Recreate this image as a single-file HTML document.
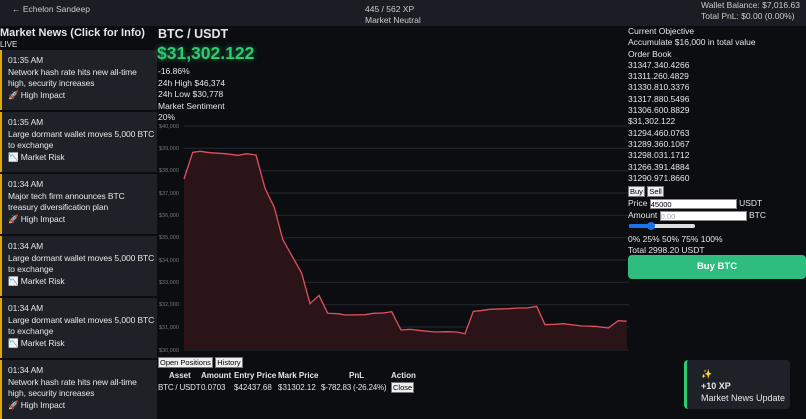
<!DOCTYPE html>
<html><head><meta charset="utf-8"><style>
*{margin:0;padding:0;box-sizing:border-box}
body{width:806px;height:419px;overflow:hidden;background:#0b0d11;color:#e6e6e6;font-family:"Liberation Sans",sans-serif;font-size:8.5px;position:relative}
.hdr{position:absolute;left:0;top:0;width:806px;height:26px;background:#1a1d23}
.abs{position:absolute;white-space:nowrap}
.card{position:absolute;left:0;width:157px;height:60px;background:#1e2127;border-left:2px solid #e0a800;padding:5px 0 0 6px;line-height:11.6px;font-size:8.5px;white-space:nowrap;overflow:hidden;letter-spacing:-0.1px}
.btn{display:inline-block;background:#efefef;color:#000;border:1px solid #767676;font-size:7.5px;padding:0 1px;line-height:9px}
.ob div{line-height:11.3px}
</style></head><body>
<div class="hdr"></div>
<div class="abs" style="left:12px;top:4px;color:#ccc">← Echelon Sandeep</div>
<div class="abs" style="left:365px;top:4px;color:#ccc">445 / 562 XP</div>
<div class="abs" style="left:365px;top:15px;color:#ccc">Market Neutral</div>
<div class="abs" style="left:701px;top:0px;color:#ccc">Wallet Balance: $7,016.63</div>
<div class="abs" style="left:701px;top:11px;color:#ccc">Total PnL: $0.00 (0.00%)</div>

<div class="abs" style="left:0;top:27px;font-weight:bold;font-size:11px">Market News (Click for Info)</div>
<div class="abs" style="left:0;top:40px;font-size:8px">LIVE</div>

<div class="card" style="top:50px">01:35 AM<br>Network hash rate hits new all-time<br>high, security increases<br>🚀 High Impact</div>
<div class="card" style="top:112px">01:35 AM<br>Large dormant wallet moves 5,000 BTC<br>to exchange<br>📉 Market Risk</div>
<div class="card" style="top:174px">01:34 AM<br>Major tech firm announces BTC<br>treasury diversification plan<br>🚀 High Impact</div>
<div class="card" style="top:236px">01:34 AM<br>Large dormant wallet moves 5,000 BTC<br>to exchange<br>📉 Market Risk</div>
<div class="card" style="top:298px">01:34 AM<br>Large dormant wallet moves 5,000 BTC<br>to exchange<br>📉 Market Risk</div>
<div class="card" style="top:360px;height:59px">01:34 AM<br>Network hash rate hits new all-time<br>high, security increases<br>🚀 High Impact</div>

<div class="abs" style="left:158px;top:27px;font-weight:bold;font-size:12.5px">BTC / USDT</div>
<div class="abs" style="left:157px;top:43px;font-weight:bold;font-size:17.5px;color:#2ecc71;text-shadow:0 0 6px rgba(46,204,113,.6)">$31,302.122</div>
<div class="abs" style="left:158px;top:66px;line-height:11.5px">-16.86%<br>24h High $46,374<br>24h Low $30,778<br>Market Sentiment<br>20%</div>

<svg class="abs" style="left:155px;top:120px" width="475" height="238" viewBox="155 120 475 238">
<g stroke="#262a30" stroke-width="1">
<line x1="184" x2="629" y1="126" y2="126"/><line x1="184" x2="629" y1="148.3" y2="148.3"/><line x1="184" x2="629" y1="170.7" y2="170.7"/><line x1="184" x2="629" y1="193" y2="193"/><line x1="184" x2="629" y1="215.3" y2="215.3"/><line x1="184" x2="629" y1="237.7" y2="237.7"/><line x1="184" x2="629" y1="260" y2="260"/><line x1="184" x2="629" y1="282.3" y2="282.3"/><line x1="184" x2="629" y1="304.7" y2="304.7"/><line x1="184" x2="629" y1="327" y2="327"/><line x1="184" x2="629" y1="350" y2="350"/>
</g>
<g fill="#777" font-size="5.5" font-family="Liberation Sans">
<text x="159" y="128">$40,000</text><text x="159" y="150">$39,000</text><text x="159" y="172">$38,000</text><text x="159" y="195">$37,000</text><text x="159" y="217">$36,000</text><text x="159" y="239">$35,000</text><text x="159" y="262">$34,000</text><text x="159" y="284">$33,000</text><text x="159" y="306">$32,000</text><text x="159" y="329">$31,000</text><text x="159" y="352">$30,000</text>
</g>
<path d="M184,179 L192.7,152.3 200,151.3 210,152.7 225,153.7 238.3,155.3 246.7,153.7 256,155 265,188.3 274.3,207.3 282.7,239.3 301.7,273.3 310,303.7 319,295.3 327.7,313.3 338.3,313.7 345,315 365,314.7 373.3,313.3 383.3,313 391.7,311.7 401,330 410,329.3 421.7,330.7 435,332 446.7,331.7 456.7,332 465,333.7 473.3,311.3 480,310.7 490,309.3 508.3,308.7 518.3,308 526.7,308 536.7,306.3 545,324.7 555,324.3 563.3,323.7 581.7,326 595,326.3 608.3,328 618.3,320.7 626.7,321.3 L627,350 L184,350Z" fill="#2a1418" stroke="none"/>
<path d="M184,179 L192.7,152.3 200,151.3 210,152.7 225,153.7 238.3,155.3 246.7,153.7 256,155 265,188.3 274.3,207.3 282.7,239.3 301.7,273.3 310,303.7 319,295.3 327.7,313.3 338.3,313.7 345,315 365,314.7 373.3,313.3 383.3,313 391.7,311.7 401,330 410,329.3 421.7,330.7 435,332 446.7,331.7 456.7,332 465,333.7 473.3,311.3 480,310.7 490,309.3 508.3,308.7 518.3,308 526.7,308 536.7,306.3 545,324.7 555,324.3 563.3,323.7 581.7,326 595,326.3 608.3,328 618.3,320.7 626.7,321.3" fill="none" stroke="#e0505e" stroke-width="1.3"/>
</svg>

<div class="abs" style="left:158px;top:357px"><span class="btn">Open Positions</span> <span class="btn">History</span></div>
<div style="font-size:8px">
<div class="abs" style="left:169px;top:371px;font-weight:bold">Asset</div>
<div class="abs" style="left:201px;top:371px;font-weight:bold">Amount</div>
<div class="abs" style="left:234px;top:371px;font-weight:bold">Entry Price</div>
<div class="abs" style="left:278px;top:371px;font-weight:bold">Mark Price</div>
<div class="abs" style="left:349px;top:371px;font-weight:bold">PnL</div>
<div class="abs" style="left:391px;top:371px;font-weight:bold">Action</div>
<div class="abs" style="left:158px;top:383px;letter-spacing:-0.2px">BTC / USDT</div>
<div class="abs" style="left:201px;top:383px">0.0703</div>
<div class="abs" style="left:234px;top:383px">$42437.68</div>
<div class="abs" style="left:278px;top:383px">$31302.12</div>
<div class="abs" style="left:321px;top:383px;letter-spacing:-0.2px">$-782.83 (-26.24%)</div>
<div class="abs" style="left:391px;top:382px"><span class="btn">Close</span></div>
</div>

<div class="abs ob" style="left:628px;top:26px">
<div>Current Objective</div><div>Accumulate $16,000 in total value</div><div>Order Book</div>
<div>31347.340.4266</div><div>31311.260.4829</div><div>31330.810.3376</div><div>31317.880.5496</div><div>31306.600.8829</div><div>$31,302.122</div><div>31294.460.0763</div><div>31289.360.1067</div><div>31298.031.1712</div><div>31266.391.4884</div><div>31290.971.8660</div>
</div>
<div class="abs" style="left:628px;top:186px"><span class="btn">Buy</span> <span class="btn">Sell</span></div>
<div class="abs" style="left:628px;top:198px">Price <span style="display:inline-block;width:87px;height:10px;background:#fff;color:#000;font-size:7.5px;line-height:9px;vertical-align:middle;border:1px solid #888">45000</span> USDT</div>
<div class="abs" style="left:628px;top:210px">Amount <span style="display:inline-block;width:87px;height:10px;background:#fff;color:#aaa;font-size:7.5px;line-height:9px;vertical-align:middle;border:1px solid #888">0.00</span> BTC</div>
<div class="abs" style="left:629px;top:224px;width:66px;height:4px;background:#ddd;border-radius:2px"><div style="width:22px;height:4px;background:#1a73e8;border-radius:2px"></div><div style="position:absolute;left:18px;top:-2px;width:8px;height:8px;border-radius:50%;background:#1a73e8"></div></div>
<div class="abs" style="left:628px;top:234px">0% 25% 50% 75% 100%</div>
<div class="abs" style="left:628px;top:245px">Total 2998.20 USDT</div>
<div class="abs" style="left:628px;top:255px;width:178px;height:24px;background:#2ebd7f;border-radius:4px;color:#fff;font-weight:bold;font-size:9.5px;text-align:center;line-height:24px">Buy BTC</div>

<div class="abs" style="left:684px;top:360px;width:106px;height:49px;background:#1e2127;border-left:3px solid #2ecc71;border-radius:4px;padding:8px 0 0 14px;line-height:12px;font-size:9px">✨<br><b>+10 XP</b><br>Market News Update</div>
</body></html>
